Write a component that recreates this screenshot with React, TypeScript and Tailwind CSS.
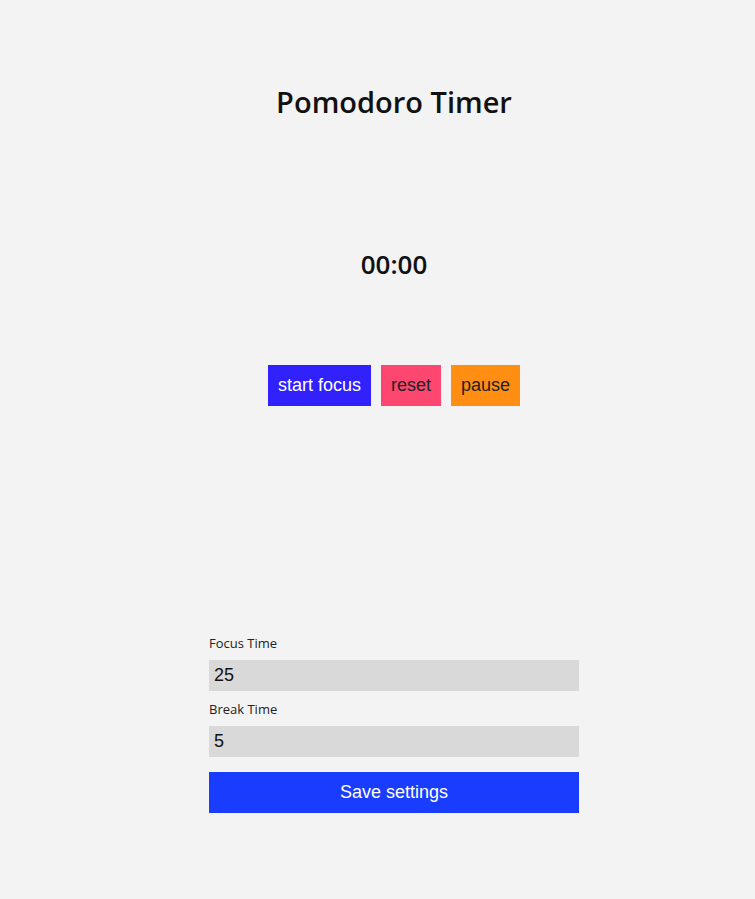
import React from "react";

const heading = "font-['Open_Sans',_'Liberation_Sans',_sans-serif]";

export default function App() {
  return (
    <div className="min-h-[899px] bg-[#f3f3f3] pl-[33px] flex flex-col items-center">
      <h1 className={`${heading} mt-[84px] h-[36px] leading-[36px] text-[29px] font-semibold text-[#111]`}>
        Pomodoro Timer
      </h1>

      <div className={`${heading} mt-[129px] h-[30px] leading-[30px] text-[26px] font-semibold text-[#111]`}>
        00:00
      </div>

      <div className="mt-[86px] flex gap-[10px] font-['Liberation_Sans',_Arial,_sans-serif] text-[18px]">
        <button className="h-[41px] px-[10px] bg-[#3021fd] text-white">start focus</button>
        <button className="h-[41px] px-[10px] bg-[#fd4770] text-[#222]">reset</button>
        <button className="h-[41px] px-[10px] bg-[#ff8e13] text-[#222]">pause</button>
      </div>

      <form className="mt-[229px] w-[370px] flex flex-col">
        <label className={`${heading} text-[13px] leading-[16px] text-[#222]`}>Focus Time</label>
        <input
          defaultValue="25"
          className="mt-[9px] h-[31px] px-[5px] bg-[#d9d9d9] font-['Liberation_Sans',_Arial,_sans-serif] text-[18px] text-[#111] outline-none"
        />
        <label className={`${heading} mt-[10px] text-[13px] leading-[16px] text-[#222]`}>Break Time</label>
        <input
          defaultValue="5"
          className="mt-[9px] h-[31px] px-[5px] bg-[#d9d9d9] font-['Liberation_Sans',_Arial,_sans-serif] text-[18px] text-[#111] outline-none"
        />
        <button
          type="button"
          className="mt-[15px] h-[41px] bg-[#1a3cff] text-white font-['Liberation_Sans',_Arial,_sans-serif] text-[18px]"
        >
          Save settings
        </button>
      </form>
    </div>
  );
}
